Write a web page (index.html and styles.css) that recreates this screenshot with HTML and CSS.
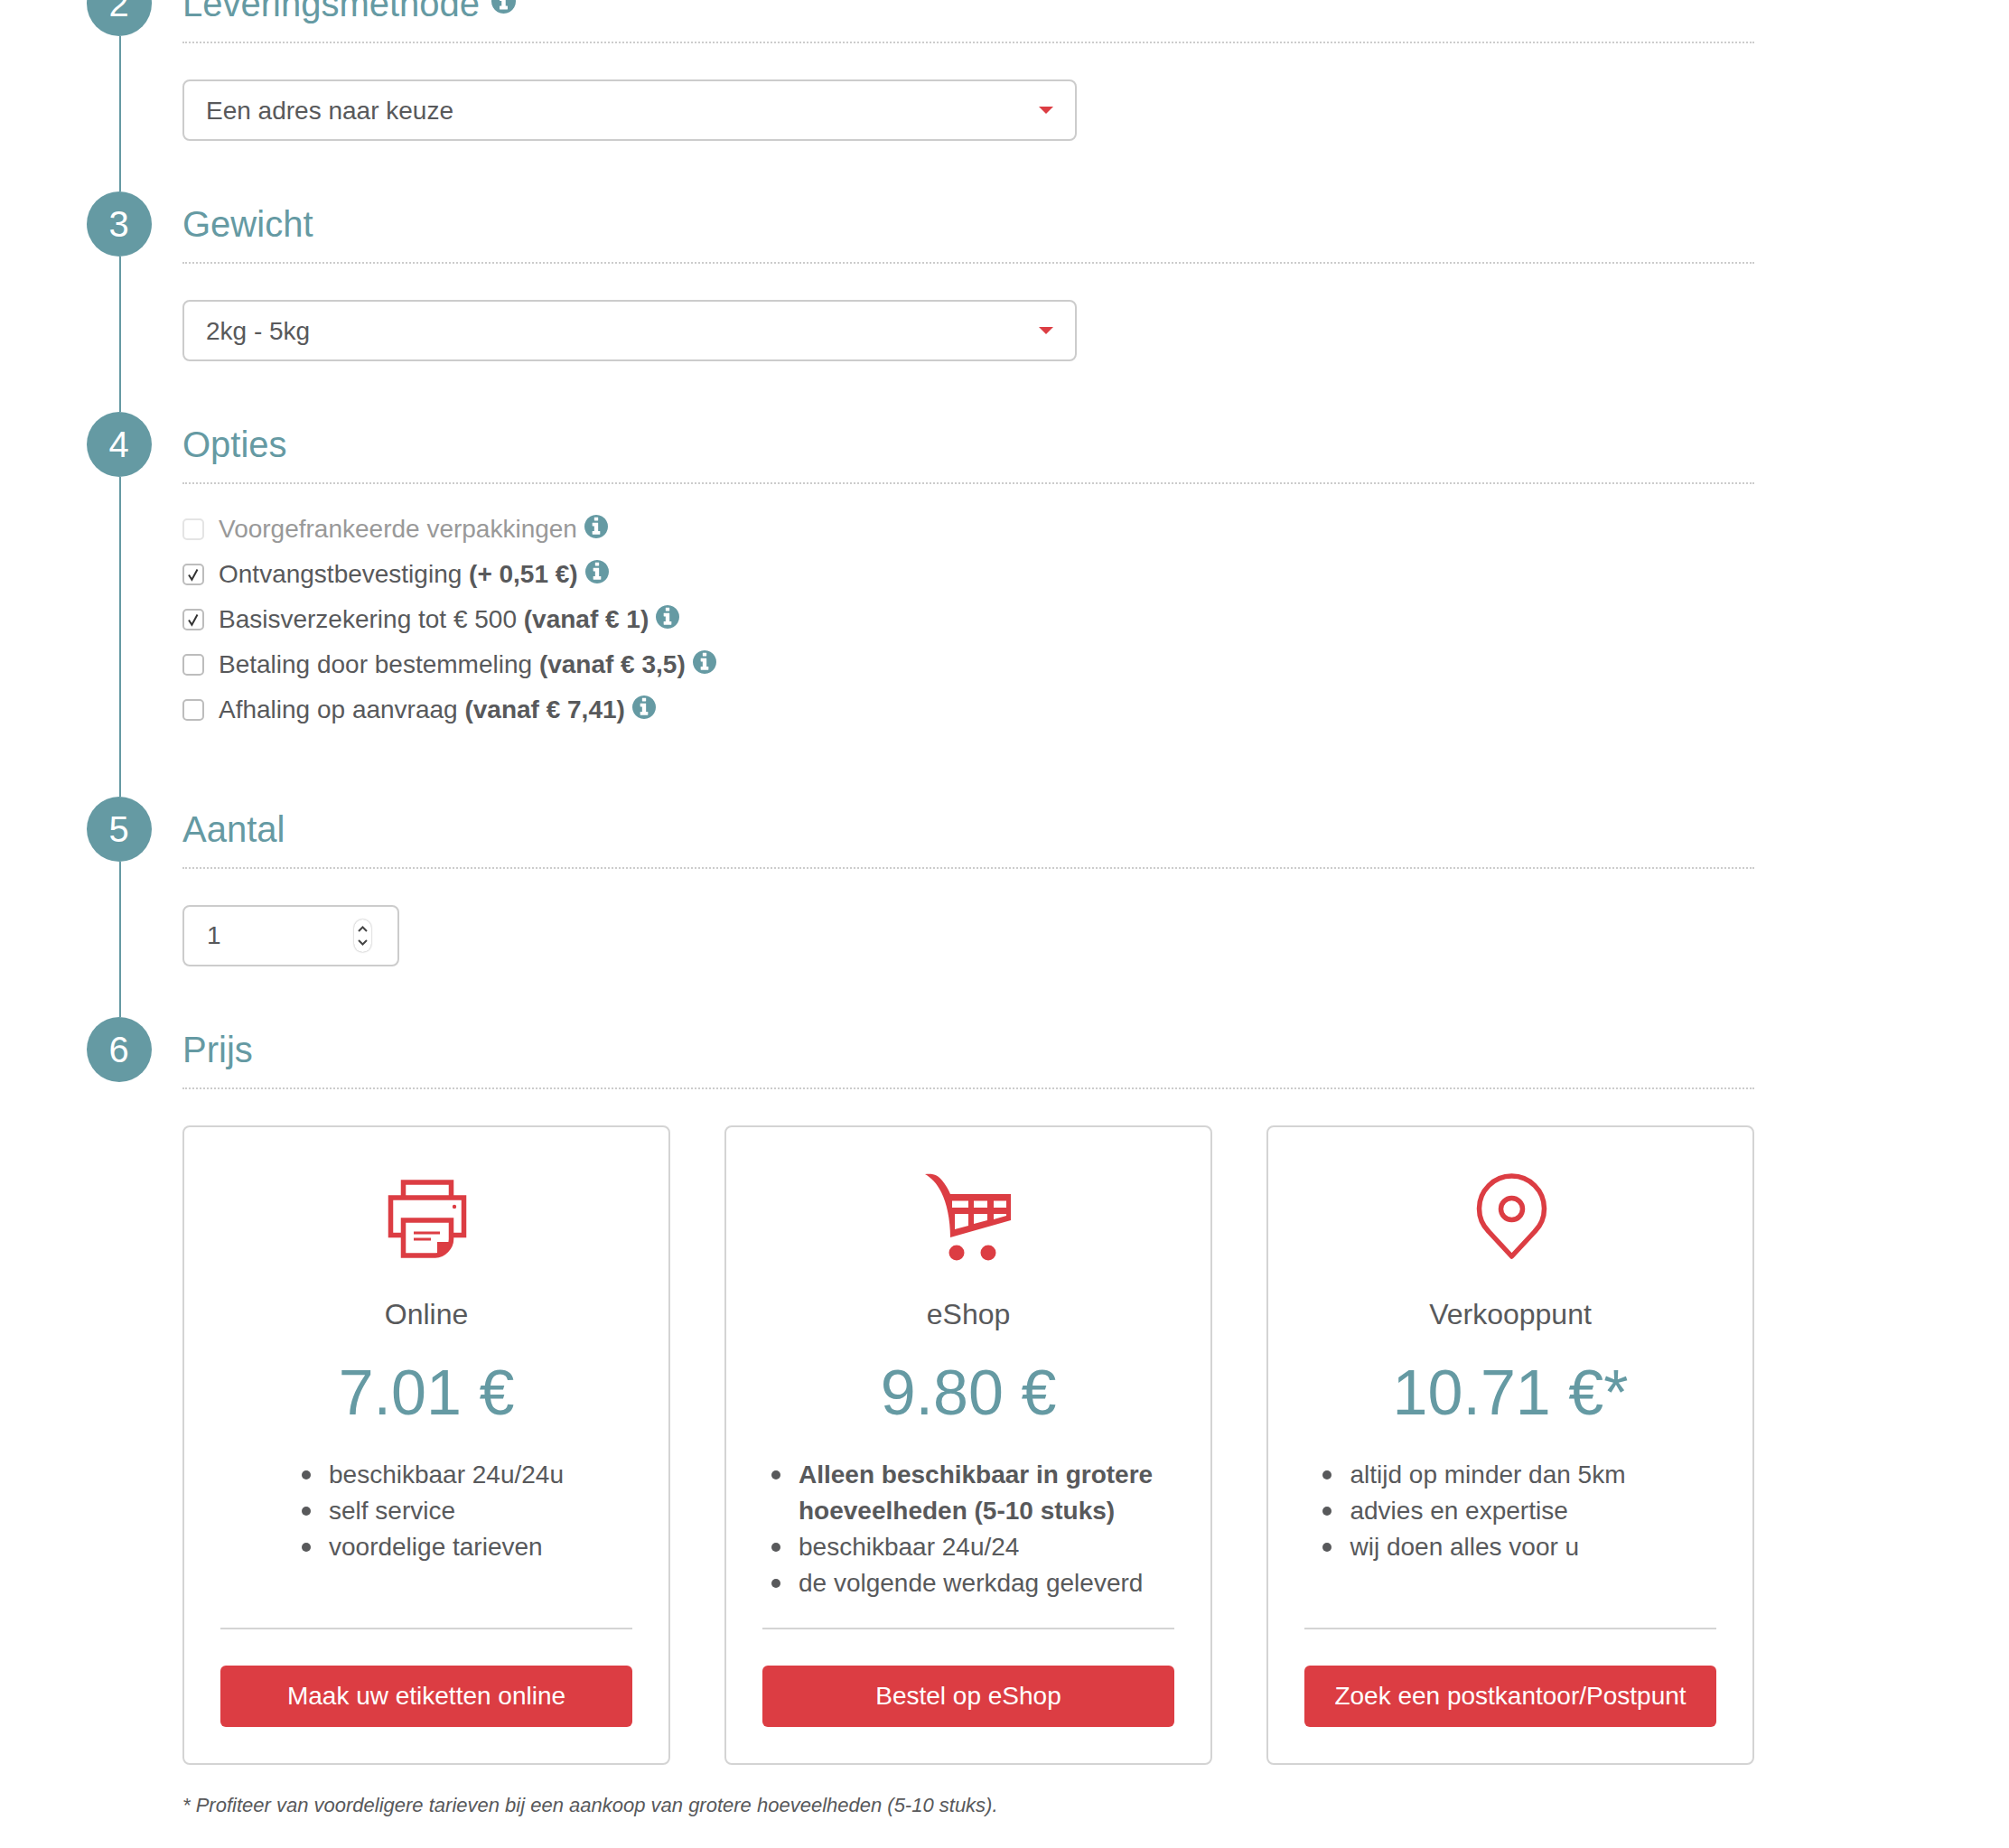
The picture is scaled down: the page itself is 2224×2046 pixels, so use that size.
FILE: index.html
```html
<!DOCTYPE html>
<html lang="nl">
<head>
<meta charset="utf-8">
<title>Prijs berekenen</title>
<link rel="stylesheet" href="styles.css">
</head>
<body>
<svg class="defs" width="0" height="0" aria-hidden="true">
  <symbol id="info" viewBox="0 128 1536 1536">
    <path d="M1024 1376v-160q0-14-9-23t-23-9h-96v-512q0-14-9-23t-23-9h-320q-14 0-23 9t-9 23v160q0 14 9 23t23 9h96v320h-96q-14 0-23 9t-9 23v160q0 14 9 23t23 9h448q14 0 23-9t9-23zm-128-896v-160q0-14-9-23t-23-9h-192q-14 0-23 9t-9 23v160q0 14 9 23t23 9h192q14 0 23-9t9-23zm640 416q0 209-103 385.5t-279.5 279.5-385.5 103-385.5-103-279.5-279.5-103-385.5 103-385.5 279.5-279.5 385.5-103 385.5 103 279.5 279.5 103 385.5z"/>
  </symbol>
  <symbol id="tick" viewBox="0 0 24 24">
    <path d="M7 12.5l3.4 5.2L16.5 6.5" fill="none" stroke="#333" stroke-width="2"/>
  </symbol>
</svg>

<main class="steps">
  <section class="step">
    <div class="badge">2</div>
    <div class="step-body">
      <h2 class="step-title">Leveringsmethode <svg class="info info-title"><use href="#info"/></svg></h2>
      <div class="select"><span>Een adres naar keuze</span><i class="caret"></i></div>
    </div>
  </section>

  <section class="step">
    <div class="badge">3</div>
    <div class="step-body">
      <h2 class="step-title">Gewicht</h2>
      <div class="select"><span>2kg - 5kg</span><i class="caret"></i></div>
    </div>
  </section>

  <section class="step step-options">
    <div class="badge">4</div>
    <div class="step-body">
      <h2 class="step-title">Opties</h2>
      <ul class="options">
        <li class="option is-disabled"><span class="check"></span><span>Voorgefrankeerde verpakkingen</span><svg class="info"><use href="#info"/></svg></li>
        <li class="option"><span class="check"><svg class="tick"><use href="#tick"/></svg></span><span>Ontvangstbevestiging <b>(+ 0,51 €)</b></span><svg class="info"><use href="#info"/></svg></li>
        <li class="option"><span class="check"><svg class="tick"><use href="#tick"/></svg></span><span>Basisverzekering tot € 500 <b>(vanaf € 1)</b></span><svg class="info"><use href="#info"/></svg></li>
        <li class="option"><span class="check"></span><span>Betaling door bestemmeling <b>(vanaf € 3,5)</b></span><svg class="info"><use href="#info"/></svg></li>
        <li class="option"><span class="check"></span><span>Afhaling op aanvraag <b>(vanaf € 7,41)</b></span><svg class="info"><use href="#info"/></svg></li>
      </ul>
    </div>
  </section>

  <section class="step">
    <div class="badge">5</div>
    <div class="step-body">
      <h2 class="step-title">Aantal</h2>
      <div class="number">
        <span>1</span>
        <span class="spinner">
          <svg width="19" height="36" viewBox="0 0 19 36"><path d="M5 13l4.500-4.500L14 13M5 23l4.500 4.500L14 23" fill="none" stroke="#444" stroke-width="2"/></svg>
        </span>
      </div>
    </div>
  </section>

  <section class="step step-last">
    <div class="badge">6</div>
    <div class="step-body">
      <h2 class="step-title">Prijs</h2>
      <div class="cards">
        <article class="card">
          <svg class="card-icon" viewBox="-3 0 150 120">
            <g fill="none" stroke="#dc3d43" stroke-width="5.500">
              <path d="M46.500 44V29H99.500V44"/>
              <path d="M45 87.500H32.500V46H113.500V87.500H101"/>
              <path d="M46.500 71H99.500V92C99.500 101 91 110 82 110H46.500Z"/>
              <path d="M58 85H87M58 92H77" stroke-width="3"/>
            </g>
            <path d="M84 109V95H99C99 102 91 109 84 109Z" fill="#dc3d43"/>
            <circle cx="103" cy="56" r="2.200" fill="#dc3d43"/>
          </svg>
          <h3 class="card-name">Online</h3>
          <div class="price">7.01 €</div>
          <ul class="features features-short">
            <li>beschikbaar 24u/24u</li>
            <li>self service</li>
            <li>voordelige tarieven</li>
          </ul>
          <hr class="divider">
          <a class="btn">Maak uw etiketten online</a>
        </article>

        <article class="card">
          <svg class="card-icon" viewBox="-3 0 150 120">
            <path fill="#dc3d43" fill-rule="evenodd" d="M24 20C34 19 38 21 43 27C47 32 50 37 52 42H119V71L52 90C52 70 48 52 42 40C37 30 31 24 24 20ZM54 49.500V57H72V49.500ZM78 49.500V57H93V49.500ZM100 49.500V57H114V49.500ZM57 64V81L72 77V64ZM78 64V75L93 71V64ZM100 64V70L114 66V64Z"/>
            <circle cx="59" cy="107" r="8.500" fill="#dc3d43"/>
            <circle cx="94" cy="107" r="8.500" fill="#dc3d43"/>
          </svg>
          <h3 class="card-name">eShop</h3>
          <div class="price">9.80 €</div>
          <ul class="features">
            <li><b>Alleen beschikbaar in grotere hoeveelheden (5-10 stuks)</b></li>
            <li>beschikbaar 24u/24</li>
            <li>de volgende werkdag geleverd</li>
          </ul>
          <hr class="divider">
          <a class="btn">Bestel op eShop</a>
        </article>

        <article class="card">
          <svg class="card-icon" viewBox="-4 -1 150 120">
            <g fill="none" stroke="#dc3d43" stroke-width="5.500">
              <path d="M72.500 110L47 82.500A36 36 0 1 1 98 82.500Z" stroke-linejoin="round"/>
              <circle cx="72.500" cy="57.500" r="12"/>
            </g>
          </svg>
          <h3 class="card-name">Verkooppunt</h3>
          <div class="price">10.71 €*</div>
          <ul class="features features-offset">
            <li>altijd op minder dan 5km</li>
            <li>advies en expertise</li>
            <li>wij doen alles voor u</li>
          </ul>
          <hr class="divider">
          <a class="btn">Zoek een postkantoor/Postpunt</a>
        </article>
      </div>
      <p class="footnote">* Profiteer van voordeligere tarieven bij een aankoop van grotere hoeveelheden (5-10 stuks).</p>
    </div>
  </section>
</main>
</body>
</html>
```

FILE: styles.css
```css
* { box-sizing: border-box; }

html, body { margin: 0; background: #fff; }

body {
  font-family: "Liberation Sans", Arial, sans-serif;
  font-size: 28px;
  line-height: 40px;
  color: #58595b;
  overflow: hidden;
}

.defs { position: absolute; }

.steps {
  margin: -32px 0 0 96px;
  width: 1846px;
}

.step {
  position: relative;
  display: flex;
  gap: 34px;
  padding-bottom: 56px;
}

.step::before {
  content: "";
  position: absolute;
  left: 36px;
  top: 72px;
  bottom: 0;
  width: 2px;
  background: #659aa3;
}

.step-options { padding-bottom: 71px; }
.step-last { padding-bottom: 0; }
.step-last::before { display: none; }

.badge {
  flex: none;
  width: 72px;
  height: 72px;
  padding-right: 1px;
  border-radius: 50%;
  background: #659aa3;
  color: #fff;
  font-size: 40px;
  line-height: 72px;
  text-align: center;
}

.step-body { flex: 1; min-width: 0; }

.step-title {
  height: 80px;
  margin: 0 0 40px;
  border-bottom: 2px dotted #ccc;
  color: #659aa3;
  font-size: 40px;
  font-weight: 400;
  line-height: 72px;
}

.info {
  width: 26px;
  height: 26px;
  fill: #659aa3;
  flex: none;
}

.info-title {
  width: 27px;
  height: 27px;
  margin-left: 2px;
  vertical-align: 3px;
}

.select {
  display: flex;
  align-items: center;
  justify-content: space-between;
  width: 990px;
  height: 68px;
  padding: 2px 24px 0 24px;
  border: 2px solid #ccc;
  border-radius: 8px;
}

.caret {
  width: 0;
  height: 0;
  margin-top: -2px;
  border-left: 8px solid transparent;
  border-right: 8px solid transparent;
  border-top: 8px solid #dc3d43;
}

.options {
  list-style: none;
  margin: -15px 0 0;
  padding: 0;
}

.option {
  display: flex;
  align-items: center;
  height: 50px;
}

.option .info {
  margin: -6px 0 0 8px;
}

.check {
  flex: none;
  display: block;
  width: 24px;
  height: 24px;
  margin-right: 16px;
  border: 2px solid #bdbdbd;
  border-radius: 5px;
  background: #fff;
  position: relative;
}

.tick {
  position: absolute;
  left: -2px;
  top: -2px;
  width: 24px;
  height: 24px;
}

.is-disabled { color: #999; }
.is-disabled .check { border-color: #e4e4e4; }

.number {
  display: flex;
  align-items: center;
  justify-content: space-between;
  width: 240px;
  height: 68px;
  padding: 0 29px 0 25px;
  border: 2px solid #ccc;
  border-radius: 8px;
}

.spinner {
  display: block;
  width: 19px;
  height: 36px;
  border-radius: 10px;
  box-shadow: 0 0 2px #999;
  background: #fff;
}

.spinner svg { display: block; }

.cards {
  display: grid;
  grid-template-columns: repeat(3, 1fr);
  gap: 60px;
}

.card {
  display: flex;
  flex-direction: column;
  height: 708px;
  padding: 32px 40px 40px;
  border: 2px solid #d4d4d4;
  border-radius: 8px;
  text-align: center;
}

.card-icon {
  display: block;
  width: 150px;
  height: 120px;
  margin: 0 auto;
}

.card-name {
  margin: 33px 0 0;
  font-size: 32px;
  font-weight: 400;
  line-height: 44px;
}

.price {
  margin-top: 25px;
  color: #659aa3;
  font-size: 70px;
  line-height: 80px;
}

.features {
  flex: 1;
  width: fit-content;
  max-width: 100%;
  margin: 31px auto 0;
  padding: 0 0 0 40px;
  list-style: none;
  text-align: left;
}

.features li { position: relative; }

.features li::before {
  content: "";
  position: absolute;
  left: -30px;
  top: 15px;
  width: 10px;
  height: 10px;
  border-radius: 50%;
  background: #58595b;
}

.features-short { padding-left: 44px; }
.features-offset { padding-right: 90px; }

.divider {
  flex: none;
  width: 100%;
  height: 2px;
  margin: 0 0 40px;
  border: 0;
  background: #d4d4d4;
}

.btn {
  display: block;
  flex: none;
  height: 68px;
  border-radius: 6px;
  background: #dc3d43;
  color: #fff;
  line-height: 68px;
  text-align: center;
}

.footnote {
  margin: 29px 0 0;
  font-size: 22px;
  font-style: italic;
  line-height: 32px;
}
```
